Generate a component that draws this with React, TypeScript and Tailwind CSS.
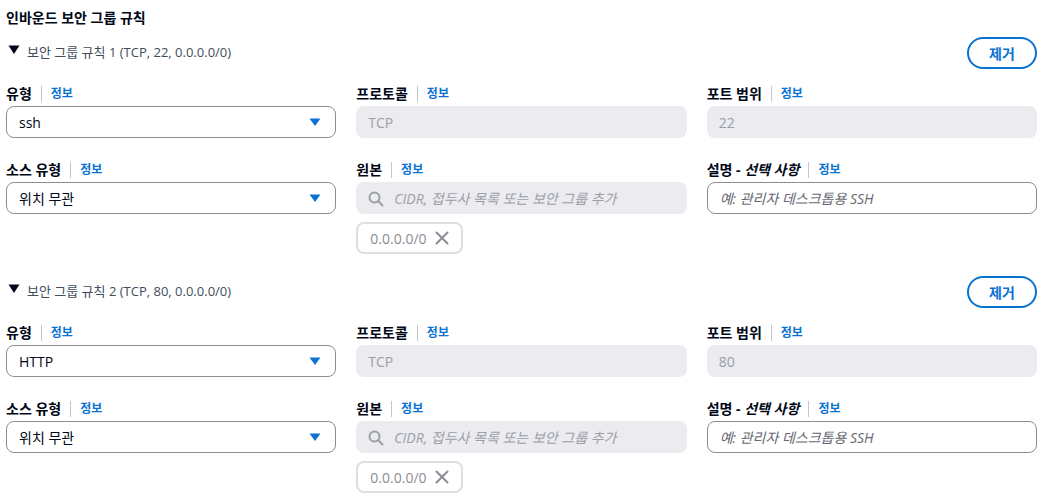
import React from "react";

const FONT = { fontFamily: '"Open Sans", "Noto Sans CJK KR", sans-serif' };

function InfoSep() {
  return (
    <>
      <span className="mx-[9px] w-px h-[16px] bg-[#c6c6cd]" />
      <span className="text-[12px] font-bold text-[#0972d3] leading-[22px]">정보</span>
    </>
  );
}

function Label({ children }: { children: React.ReactNode }) {
  return (
    <div className="flex items-center h-[22px] mb-[1px]">
      <span className="text-[14px] font-bold text-[#000716] leading-[22px]">{children}</span>
      <InfoSep />
    </div>
  );
}

function Select({ value }: { value: string }) {
  return (
    <div className="h-[32px] rounded-lg border border-[#8c8c94] bg-white flex items-center justify-between pl-[12px] pr-[14px]">
      <span className="text-[14px] text-[#000716]">{value}</span>
      <svg width="12" height="9" viewBox="0 0 12 9">
        <path d="M0.5 0.5 L11.5 0.5 L6 8 Z" fill="#0972d3" />
      </svg>
    </div>
  );
}

function Disabled({ value, search }: { value: string; search?: boolean }) {
  return (
    <div className="h-[32px] rounded-lg bg-[#ebebf0] flex items-center pl-[12px]">
      {search && (
        <svg width="16" height="16" viewBox="0 0 16 16" className="mr-[10px] mt-[1px]">
          <circle cx="6.5" cy="6.5" r="5" fill="none" stroke="#9ba0a8" strokeWidth="2" />
          <path d="M10.2 10.2 L14.5 14.5" stroke="#9ba0a8" strokeWidth="2" strokeLinecap="round" />
        </svg>
      )}
      <span className={"text-[14px] text-[#9ba0a8]" + (search ? " italic" : "")}>{value}</span>
    </div>
  );
}

function TextInput({ placeholder }: { placeholder: string }) {
  return (
    <div className="h-[32px] rounded-lg border border-[#8c8c94] bg-white flex items-center pl-[12px]">
      <span className="text-[14px] italic text-[#656871]">{placeholder}</span>
    </div>
  );
}

function Token() {
  return (
    <div className="mt-[8px] h-[32px] w-[107px] rounded-lg border-2 border-[#dedee3] bg-white flex items-center pl-[12px]">
      <span className="text-[14px] text-[#8c8c94]">0.0.0.0/0</span>
      <svg width="14" height="14" viewBox="0 0 14 14" className="ml-[8px]">
        <path d="M1.5 1.5 L12.5 12.5 M12.5 1.5 L1.5 12.5" stroke="#8c8c94" strokeWidth="2" strokeLinecap="round" />
      </svg>
    </div>
  );
}

function Rule({ n, type, port, first }: { n: number; type: string; port: string; first?: boolean }) {
  return (
    <div className={first ? "mt-[9px]" : "mt-[22px]"}>
      <div className="flex items-center justify-between h-[32px]">
        <div className="flex items-center">
          <svg width="12" height="10" viewBox="0 0 12 10" className="ml-[2px] mr-[7px] -mt-[6px]">
            <path d="M0.5 0.5 L11.5 0.5 L6 9 Z" fill="#000716" />
          </svg>
          <span className="text-[13px] text-[#414d5c]">
            보안 그룹 규칙 {n} (TCP, {port}, 0.0.0.0/0)
          </span>
        </div>
        <button className="h-[32px] w-[70px] rounded-full border-2 border-[#0972d3] text-[14px] font-bold text-[#0972d3] bg-white">
          제거
        </button>
      </div>
      <div className="grid grid-cols-3 gap-x-[20px] mt-[14px]">
        <div>
          <Label>유형</Label>
          <Select value={type} />
        </div>
        <div>
          <Label>프로토콜</Label>
          <Disabled value="TCP" />
        </div>
        <div>
          <Label>포트 범위</Label>
          <Disabled value={port} />
        </div>
      </div>
      <div className="grid grid-cols-3 gap-x-[20px] mt-[21px]">
        <div>
          <Label>소스 유형</Label>
          <Select value="위치 무관" />
        </div>
        <div>
          <Label>원본</Label>
          <Disabled value="CIDR, 접두사 목록 또는 보안 그룹 추가" search />
          <Token />
        </div>
        <div>
          <div className="flex items-center h-[22px] mb-[1px]">
            <span className="text-[14px] font-bold text-[#000716] leading-[22px]">
              설명 - <span className="italic">선택 사항</span>
            </span>
            <InfoSep />
          </div>
          <TextInput placeholder="예: 관리자 데스크톱용 SSH" />
        </div>
      </div>
    </div>
  );
}

export default function App() {
  return (
    <div style={FONT} className="bg-white w-[1043px] h-[498px] overflow-hidden px-[6px] pt-[8px]">
      <div className="text-[14px] font-bold text-[#000716] leading-[20px]">인바운드 보안 그룹 규칙</div>
      <Rule n={1} type="ssh" port="22" first />
      <Rule n={2} type="HTTP" port="80" />
    </div>
  );
}
